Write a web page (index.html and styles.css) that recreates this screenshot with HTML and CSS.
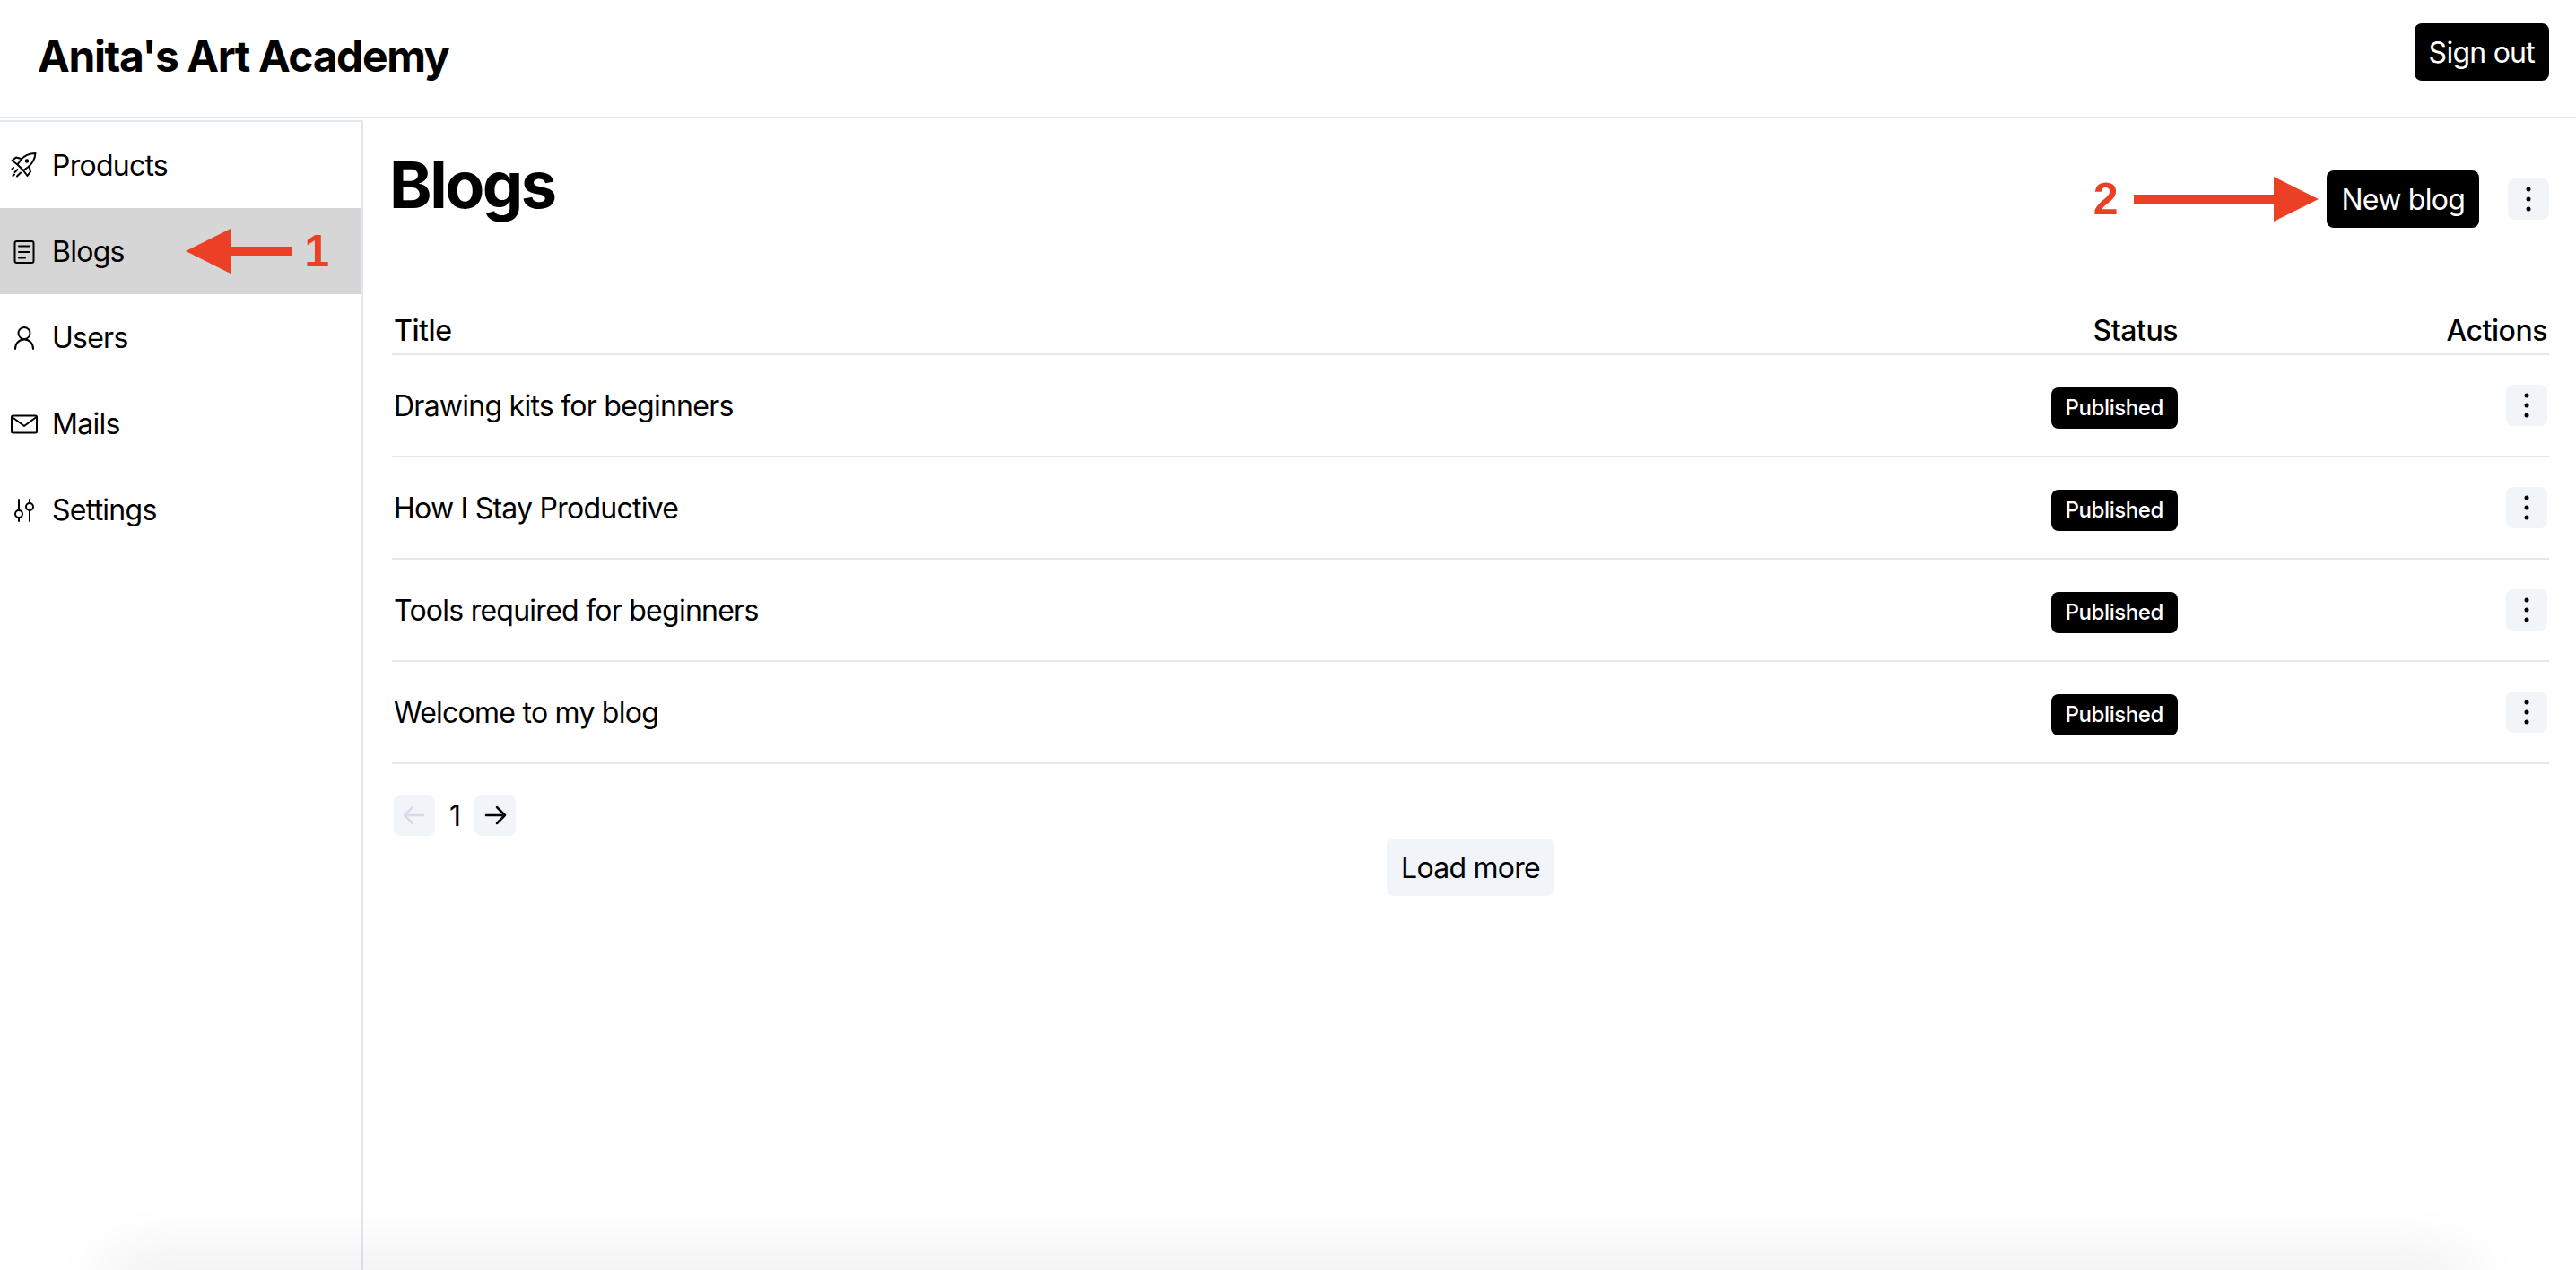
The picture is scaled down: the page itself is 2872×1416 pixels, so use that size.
FILE: index.html
```html
<!DOCTYPE html>
<html lang="en">
<head>
    <meta charset="UTF-8">
    <meta name="viewport" content="width=device-width, initial-scale=1.0">
    <title>Anita's Art Academy</title>
    <link rel="stylesheet" href="styles.css">
</head>
<body>
    <header class="topbar">
        <div class="brand">Anita's Art Academy</div>
        <button class="btn btn-dark">Sign out</button>
    </header>
    <div class="layout">
        <nav class="sidebar">
            <a class="nav-item">
                <svg class="nav-icon" viewBox="0 0 32 32">
                    <path d="M28.500 3C21.500 3 16 5.500 12 10.500L8.500 15.500L15 22L20 18.500C25 14.500 28 9.500 28.500 3Z"/>
                    <path d="M12.500 9L7 7.500L2.500 11L8.500 15.500"/>
                    <path d="M21.500 17.500L23 23.500L19.500 28L15 22"/>
                    <path d="M8.500 21L5.500 24M12 24.500L8 28.500M4 19L2.500 20.500M5 26.500L3.500 28"/>
                    <circle class="fill" cx="19" cy="11.500" r="2.300"/>
                </svg>
                <span>Products</span>
            </a>
            <a class="nav-item active">
                <svg class="nav-icon" viewBox="0 0 32 32">
                    <rect x="5.500" y="5" width="21" height="24" rx="2"/>
                    <path d="M10 10.500H22M10 17H22M10 23.500H17"/>
                </svg>
                <span>Blogs</span>
                <div class="note-left">
                    <svg class="arrow-left" viewBox="0 0 119 50">
                        <path d="M0 25L50 0V20H119V30H50V50Z"/>
                    </svg>
                    <span class="note-num">1</span>
                </div>
            </a>
            <a class="nav-item">
                <svg class="nav-icon" viewBox="0 0 32 32">
                    <circle cx="16" cy="11.500" r="6.500"/>
                    <path d="M6 29C6 23 10 18.500 16 18.500C22 18.500 26 23 26 29"/>
                </svg>
                <span>Users</span>
            </a>
            <a class="nav-item">
                <svg class="nav-icon" viewBox="0 0 32 32">
                    <rect x="2" y="7.500" width="28" height="19" rx="1.500"/>
                    <path d="M2.500 9L16 19L29.500 9"/>
                </svg>
                <span>Mails</span>
            </a>
            <a class="nav-item">
                <svg class="nav-icon" viewBox="0 0 32 32">
                    <path d="M10 5V17M10 25V29M22 5V9M22 17V29"/>
                    <circle cx="10" cy="21" r="4"/>
                    <circle cx="22" cy="13" r="4"/>
                </svg>
                <span>Settings</span>
            </a>
        </nav>
        <main class="content">
            <div class="page-head">
                <h1>Blogs</h1>
                <div class="page-actions">
                    <span class="note-num">2</span>
                    <svg class="arrow-right" viewBox="0 0 206 50">
                        <path d="M206 25L156 0V20H0V30H156V50Z"/>
                    </svg>
                    <button class="btn btn-dark new-blog">New blog</button>
                    <button class="icon-btn head-menu">
                        <svg viewBox="0 0 46 46"><circle cx="23" cy="12" r="2.500"/><circle cx="23" cy="23" r="2.500"/><circle cx="23" cy="34" r="2.500"/></svg>
                    </button>
                </div>
            </div>
            <table class="blog-table">
                <thead>
                    <tr>
                        <th>Title</th>
                        <th class="col-status">Status</th>
                        <th class="col-actions">Actions</th>
                    </tr>
                </thead>
                <tbody>
                    <tr>
                        <td>Drawing kits for beginners</td>
                        <td class="col-status"><span class="badge">Published</span></td>
                        <td class="col-actions"><button class="icon-btn"><svg viewBox="0 0 46 46"><circle cx="23" cy="12" r="2.500"/><circle cx="23" cy="23" r="2.500"/><circle cx="23" cy="34" r="2.500"/></svg></button></td>
                    </tr>
                    <tr>
                        <td>How I Stay Productive</td>
                        <td class="col-status"><span class="badge">Published</span></td>
                        <td class="col-actions"><button class="icon-btn"><svg viewBox="0 0 46 46"><circle cx="23" cy="12" r="2.500"/><circle cx="23" cy="23" r="2.500"/><circle cx="23" cy="34" r="2.500"/></svg></button></td>
                    </tr>
                    <tr>
                        <td>Tools required for beginners</td>
                        <td class="col-status"><span class="badge">Published</span></td>
                        <td class="col-actions"><button class="icon-btn"><svg viewBox="0 0 46 46"><circle cx="23" cy="12" r="2.500"/><circle cx="23" cy="23" r="2.500"/><circle cx="23" cy="34" r="2.500"/></svg></button></td>
                    </tr>
                    <tr>
                        <td>Welcome to my blog</td>
                        <td class="col-status"><span class="badge">Published</span></td>
                        <td class="col-actions"><button class="icon-btn"><svg viewBox="0 0 46 46"><circle cx="23" cy="12" r="2.500"/><circle cx="23" cy="23" r="2.500"/><circle cx="23" cy="34" r="2.500"/></svg></button></td>
                    </tr>
                </tbody>
            </table>
            <div class="pager">
                <button class="icon-btn pager-prev">
                    <svg viewBox="0 0 46 46"><path d="M33 23H12M21 14L12 23L21 32"/></svg>
                </button>
                <span class="pager-num">1</span>
                <button class="icon-btn pager-next">
                    <svg viewBox="0 0 46 46"><path d="M13 23H34M25 14L34 23L25 32"/></svg>
                </button>
            </div>
            <div class="load-row">
                <button class="btn btn-light">Load more</button>
            </div>
        </main>
    </div>
    <div class="bottom-shadow"></div>
</body>
</html>
```

FILE: styles.css
```css
* {
    box-sizing: border-box;
}
html, body {
    height: 100%;
}
body {
    margin: 0;
    overflow: hidden;
    background: #fff;
    color: #000;
    font-family: Inter, "Liberation Sans", sans-serif;
    font-size: 32px;
    letter-spacing: -0.75px;
}
button {
    font-family: inherit;
    letter-spacing: inherit;
    border: none;
    cursor: pointer;
}

.topbar {
    display: flex;
    justify-content: space-between;
    align-items: flex-start;
    height: 132px;
    padding: 26px 30px 0 42px;
    border-bottom: 2px solid #e2e8f0;
}
.brand {
    padding-top: 5px;
    font-size: 48px;
    font-weight: 700;
    line-height: 64px;
    letter-spacing: -1.4px;
}
.btn {
    height: 64px;
    padding: 0 16px;
    border-radius: 8px;
    font-size: 32px;
    font-weight: 400;
}
.btn-dark {
    background: #000;
    color: #fff;
}
.btn-light {
    background: #f1f5f9;
    color: #000;
}

.layout {
    display: flex;
    height: calc(100% - 132px);
    padding-top: 2px;
}
.sidebar {
    flex: 0 0 405px;
    border-top: 2px solid #e2e8f0;
    border-right: 2px solid #e2e8f0;
}
.nav-item {
    display: flex;
    align-items: center;
    height: 96px;
    padding-left: 11px;
}
.nav-item.active {
    background: #d6d6d6;
    padding-right: 36px;
}
.nav-icon {
    flex: none;
    width: 32px;
    height: 32px;
    margin-right: 15px;
    fill: none;
    stroke: #000;
    stroke-width: 2;
    stroke-linecap: round;
    stroke-linejoin: round;
}
.nav-icon .fill {
    fill: #000;
    stroke: none;
}
.note-left {
    display: flex;
    align-items: center;
    gap: 13px;
    margin-left: auto;
}
.arrow-left {
    width: 119px;
    height: 50px;
    fill: #eb4026;
}
.arrow-right {
    width: 206px;
    height: 50px;
    margin-left: 18px;
    fill: #eb4026;
}
.note-num {
    font-family: "Liberation Sans", Arial, sans-serif;
    font-size: 50px;
    font-weight: 700;
    line-height: 50px;
    letter-spacing: 0;
    color: #eb4026;
}

.content {
    flex: 1;
    min-width: 0;
    padding: 32px 30px 0 32px;
}
.page-head {
    display: flex;
    justify-content: space-between;
    align-items: flex-start;
    height: 175px;
}
h1 {
    margin: 0 0 0 -3px;
    font-size: 72px;
    font-weight: 700;
    line-height: 80px;
    letter-spacing: -2.5px;
}
.page-actions {
    display: flex;
    align-items: center;
    margin-top: 24px;
}
.new-blog {
    margin-left: 9px;
}
.head-menu {
    margin-left: 32px;
}
.icon-btn {
    display: inline-block;
    width: 46px;
    height: 46px;
    padding: 0;
    border-radius: 8px;
    background: #f1f5f9;
    vertical-align: top;
}
.icon-btn svg {
    display: block;
    width: 46px;
    height: 46px;
}

.blog-table {
    width: 100%;
    border-collapse: collapse;
}
.blog-table th {
    height: 54px;
    padding: 2px 2px 0;
    border-bottom: 2px solid #e2e8f0;
    font-weight: 500;
    text-align: left;
    letter-spacing: -0.45px;
}
.blog-table td {
    height: 114px;
    padding: 0 2px;
    border-bottom: 2px solid #e2e8f0;
}
.blog-table th.col-status, .blog-table td.col-status {
    text-align: right;
}
.blog-table th.col-actions, .blog-table td.col-actions {
    width: 412px;
    text-align: right;
}
.badge {
    display: inline-block;
    height: 46px;
    margin-top: 5px;
    padding: 0 16px;
    border-radius: 8px;
    background: #000;
    color: #fff;
    font-size: 24px;
    font-weight: 500;
    line-height: 46px;
    letter-spacing: -0.4px;
    vertical-align: middle;
}

.pager {
    display: flex;
    align-items: center;
    gap: 16px;
    margin-top: 34px;
    padding-left: 2px;
}
.pager svg {
    fill: none;
    stroke: #000;
    stroke-width: 2.500;
    stroke-linecap: round;
    stroke-linejoin: round;
}
.pager-prev svg {
    stroke: #d5dbe6;
}
.load-row {
    display: flex;
    justify-content: center;
    margin-top: 3px;
}

/* soft shade along the bottom edge of the window */
.bottom-shadow {
    position: fixed;
    top: 100%;
    left: 120px;
    right: 120px;
    height: 20px;
    box-shadow: 0 0 70px rgba(0, 0, 0, 0.2);
}
```
